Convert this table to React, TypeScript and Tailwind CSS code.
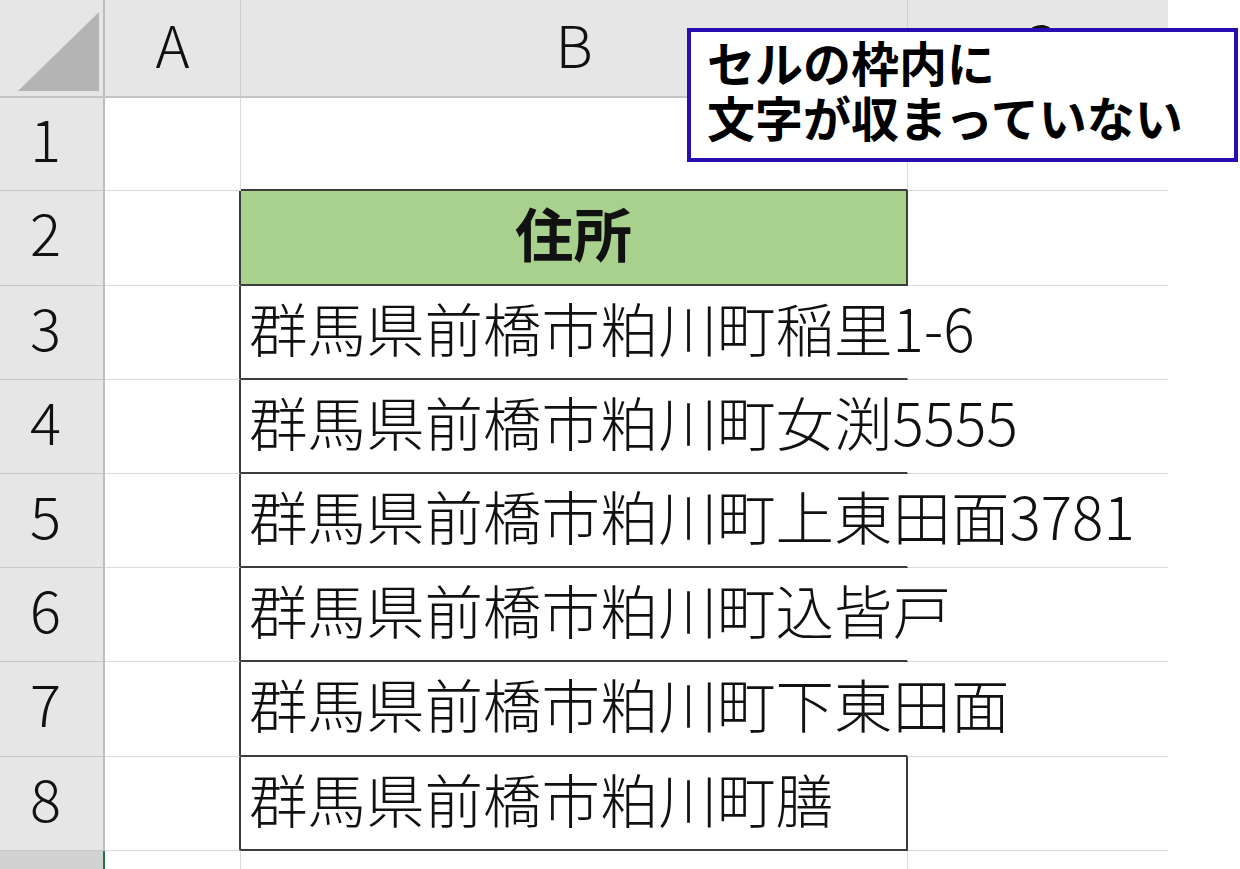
import React from "react";

type Row = {
  n: number;
  h: number;
  text?: string;
  header?: boolean;
  boxed?: boolean;
  closeRight?: boolean;
};

const rows: Row[] = [
  { n: 1, h: 93 },
  { n: 2, h: 95, text: "住所", header: true, boxed: true, closeRight: true },
  { n: 3, h: 94, text: "群馬県前橋市粕川町稲里1-6", boxed: true },
  { n: 4, h: 94, text: "群馬県前橋市粕川町女渕5555", boxed: true },
  { n: 5, h: 94, text: "群馬県前橋市粕川町上東田面3781", boxed: true },
  { n: 6, h: 94, text: "群馬県前橋市粕川町込皆戸", boxed: true },
  { n: 7, h: 95, text: "群馬県前橋市粕川町下東田面", boxed: true },
  { n: 8, h: 94, text: "群馬県前橋市粕川町膳", boxed: true, closeRight: true },
];

function SheetRow({ r }: { r: Row }) {
  const aBorder = r.boxed ? "border-r-2 border-r-[#3c3c3c]" : "border-r border-r-[#dadada]";
  const bBottom = r.boxed || r.n === 1 ? "border-b-2 border-b-[#3c3c3c]" : "border-b border-b-[#dadada]";
  const bRight = r.closeRight
    ? "border-r-2 border-r-[#3c3c3c]"
    : r.boxed
    ? "border-r border-r-transparent"
    : "border-r border-r-[#dadada]";
  return (
    <div className="flex shrink-0" style={{ height: r.h }}>
      <div className="w-[105px] shrink-0 bg-[#e6e6e6] border-r-2 border-r-[#bdbdbd] border-b border-b-[#c6c6c6] flex items-center justify-center text-[58px] font-light leading-none text-[#111] pb-[14px] pr-[12px]">
        {r.n}
      </div>
      <div className={`w-[136px] shrink-0 border-b border-b-[#dadada] ${aBorder}`} />
      <div
        className={`w-[667px] shrink-0 ${bBottom} ${bRight} flex items-center pb-[10px] ${
          r.header ? "bg-[#a9d18e] justify-center" : ""
        }`}
      >
        {r.text && (
          <span
            className={`whitespace-nowrap text-[58.5px] leading-none text-[#111] ${
              r.header ? "font-bold" : "pl-[8px] font-light"
            }`}
          >
            {r.text}
          </span>
        )}
      </div>
      <div className="w-[260px] shrink-0 border-b border-b-[#dadada]" />
    </div>
  );
}

export default function App() {
  return (
    <div className="relative w-[1240px] h-[869px] overflow-hidden bg-white font-['Noto_Sans_CJK_JP','Noto_Sans',sans-serif]">
      <div className="flex flex-col w-[1168px] h-full">
        {/* column header */}
        <div className="flex h-[98px] shrink-0 bg-[#e6e6e6] border-b-2 border-b-[#c4c4c4]">
          <div className="w-[105px] shrink-0 border-r-2 border-r-[#bdbdbd] relative">
            <svg className="absolute left-0 top-0" width="103" height="96" viewBox="0 0 103 96">
              <polygon points="18,91 99,12 99,91" fill="#b4b4b4" />
            </svg>
          </div>
          <div className="w-[136px] shrink-0 border-r border-r-[#cfcfcf] flex items-center justify-center text-[58px] font-light leading-none text-[#111] pb-[10px]">
            A
          </div>
          <div className="w-[667px] shrink-0 border-r border-r-[#cfcfcf] flex items-center justify-center text-[58px] font-light leading-none text-[#111] pb-[10px]">
            B
          </div>
          <div className="w-[260px] shrink-0 flex items-center justify-center text-[58px] font-light leading-none text-[#111] pb-[10px]">
            C
          </div>
        </div>
        {rows.map((r) => (
          <SheetRow key={r.n} r={r} />
        ))}
        {/* partial row 9 */}
        <div className="flex flex-1">
          <div className="w-[105px] shrink-0 bg-[#d2d2d2] border-r-2 border-r-[#217346]" />
          <div className="w-[136px] shrink-0 border-r border-r-[#dadada]" />
          <div className="w-[667px] shrink-0 border-r border-r-[#dadada]" />
          <div className="w-[260px] shrink-0" />
        </div>
      </div>

      {/* callout */}
      <div className="absolute left-[687px] top-[28px] w-[551px] h-[134px] bg-white border-4 border-[#2a0db0] pl-[16px] pt-[2px]">
        <div className="text-[48px] leading-[55px] font-bold text-black whitespace-nowrap">
          <div>セルの枠内に</div>
          <div>文字が収まっていない</div>
        </div>
      </div>
    </div>
  );
}
